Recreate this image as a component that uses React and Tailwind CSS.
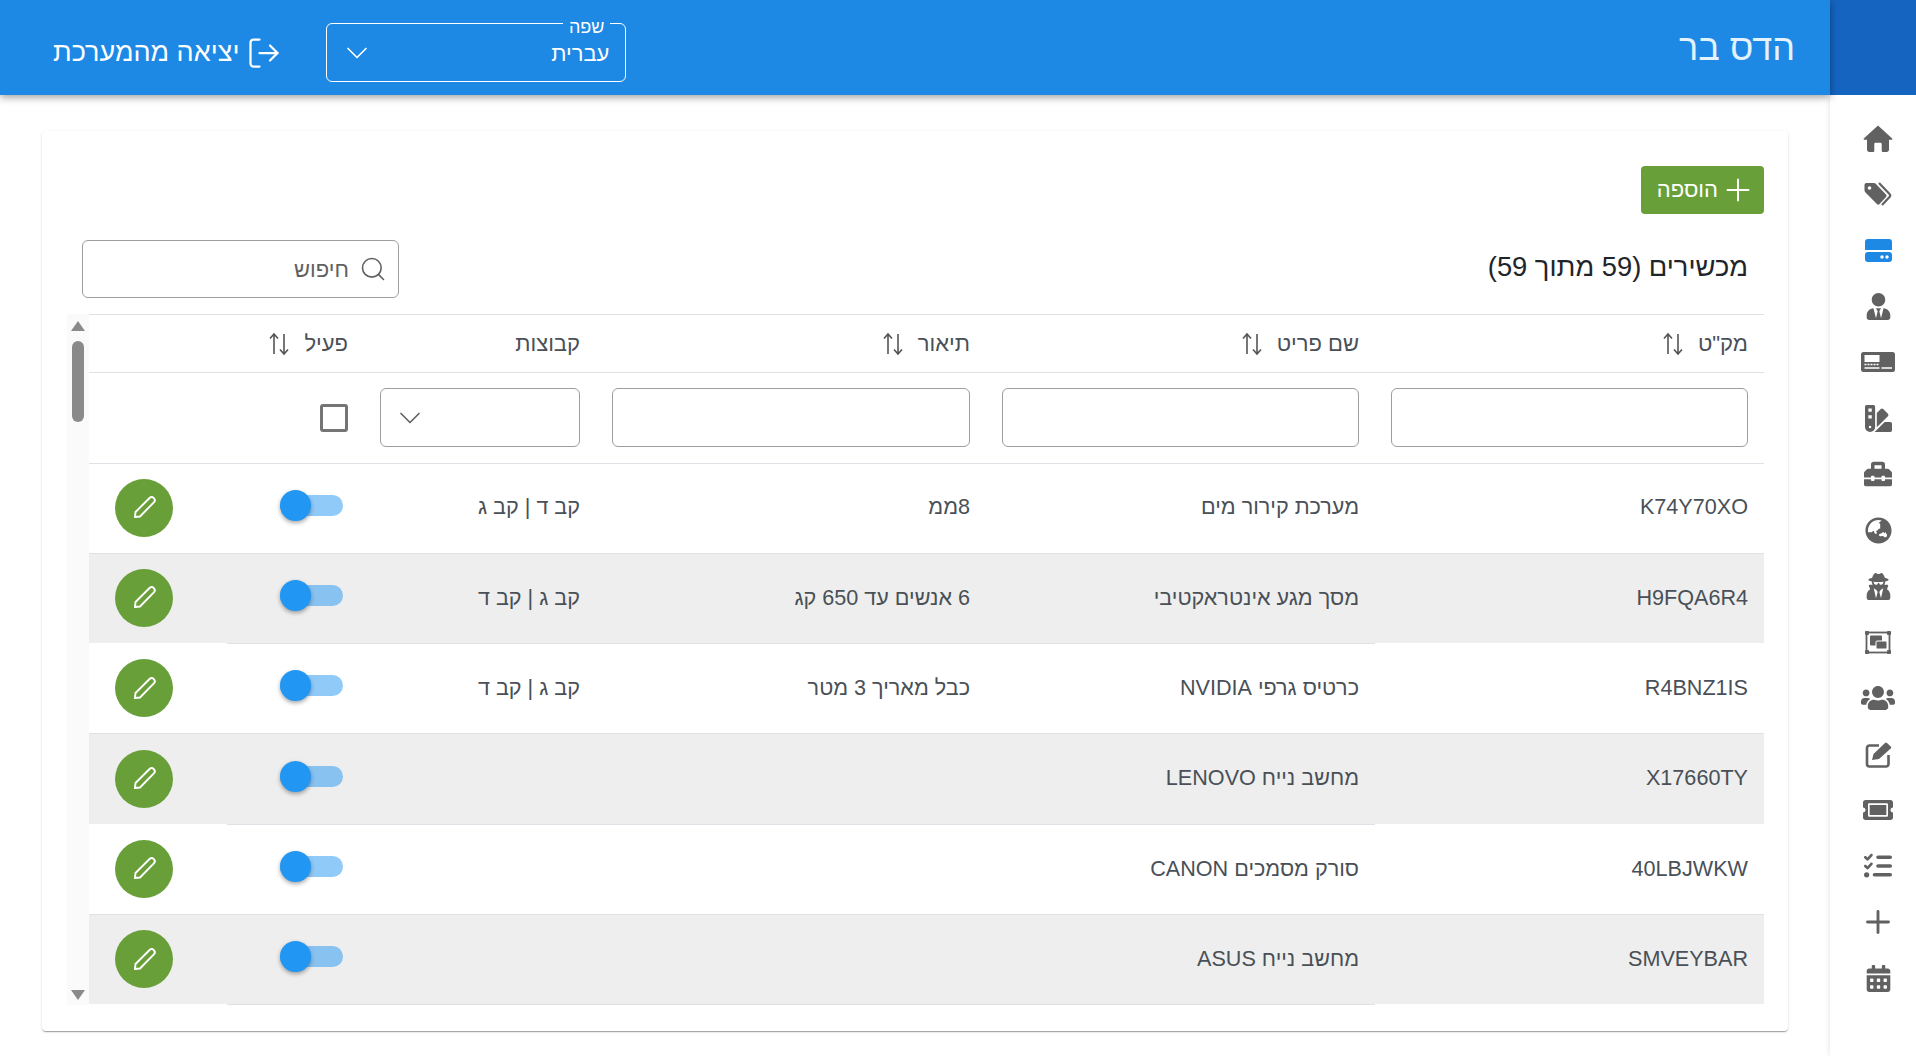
import React from 'react';
import { ChevronDown, LogOut, Search, Plus } from 'lucide-react';
import {
  FaUserTie, FaSwatchbook, FaToolbox, FaGlobeAsia, FaUserSecret,
  FaUsers, FaTicketAlt, FaCalendarAlt,
} from 'react-icons/fa';
import { FaListCheck } from 'react-icons/fa6';

const HomeIcon = () => (
  <svg width="30" height="27" viewBox="0 0 30 27" fill="currentColor">
    <path d="M15 .5 .8 13.6c-.5.5-.2 1.2.5 1.2H4v9.7C4 25.900 5 27 6.400 27H10c.8 0 1.300-.6 1.300-1.300V19c0-.8.6-1.300 1.300-1.300h4.800c.8 0 1.300.6 1.300 1.300v6.700c0 .8.6 1.300 1.300 1.300h3.600c1.400 0 2.400-1.100 2.400-2.500v-9.700h2.700c.7 0 1-.7.5-1.200z" />
  </svg>
);

const TagsIcon = () => (
  <svg width="28" height="24" viewBox="0 0 28 24">
    <path fill="currentColor" d="M2.500 1H10c.8 0 1.200.3 1.700.8L22 12.500c.8.8.8 1.800 0 2.600l-6.500 7c-.8.8-1.800.8-2.600 0L1.500 10.500C1 10 .5 9.300.5 8.500V3C.5 1.800 1.300 1 2.500 1z" />
    <circle cx="5.500" cy="6" r="1.800" fill="#fff" />
    <path fill="none" stroke="currentColor" strokeWidth="2.200" d="M15 1l10.500 11c.9.9.9 2 0 3L18 23" />
  </svg>
);

const DriveIcon = () => (
  <svg width="27" height="23" viewBox="0 0 27 23" fill="currentColor">
    <path d="M0 3a3 3 0 0 1 3-3h21a3 3 0 0 1 3 3v8H0z" />
    <path d="M0 16a3 3 0 0 1 3-3h21a3 3 0 0 1 3 3v4a3 3 0 0 1-3 3H3a3 3 0 0 1-3-3z" />
    <circle cx="17" cy="18" r="1.700" fill="#fff" />
    <circle cx="22" cy="18" r="1.700" fill="#fff" />
  </svg>
);

const CheckCardIcon = () => (
  <svg width="34" height="20" viewBox="0 0 34 20">
    <rect width="34" height="20" rx="2.500" fill="currentColor" />
    <rect x="3.500" y="3" width="15" height="7" fill="#fff" />
    <path d="M3.500 12.500h15" stroke="#fff" strokeWidth="1.500" strokeDasharray="2 1" fill="none" />
    <path d="M3.500 16h15M20.500 16h10.500" stroke="#fff" strokeWidth="1.500" fill="none" />
  </svg>
);

const FrameIcon = () => (
  <svg width="26" height="23" viewBox="0 0 26 23" fill="currentColor">
    <rect x="1.500" y="1.500" width="23" height="20" fill="none" stroke="currentColor" strokeWidth="1.800" />
    <rect width="4" height="4" rx="1" />
    <rect x="22" width="4" height="4" rx="1" />
    <rect y="19" width="4" height="4" rx="1" />
    <rect x="22" y="19" width="4" height="4" rx="1" />
    <rect x="5" y="4.500" width="12" height="10" rx="1" />
    <rect x="11" y="10" width="11" height="8" rx="1" stroke="#fff" strokeWidth="1" />
  </svg>
);

const EditIcon = () => (
  <svg width="27" height="27" viewBox="0 0 27 27">
    <path d="M14 4.500H4.500A2.500 2.500 0 0 0 2 7v16a2.500 2.500 0 0 0 2.500 2.500H21a2.500 2.500 0 0 0 2.500-2.500v-9" fill="none" stroke="currentColor" strokeWidth="2.600" />
    <path d="M7 19l1.500-6L20 2c.7-.7 1.400-.7 2 0l3.700 3.500c.7.7.7 1.400 0 2L14 18z" fill="currentColor" />
  </svg>
);

const navItems = [
  { el: <HomeIcon /> },
  { el: <TagsIcon /> },
  { el: <DriveIcon />, active: true },
  { el: <FaUserTie size={27} /> },
  { el: <CheckCardIcon /> },
  { el: <FaSwatchbook size={27} /> },
  { el: <FaToolbox size={28} /> },
  { el: <FaGlobeAsia size={27} /> },
  { el: <FaUserSecret size={27} /> },
  { el: <FrameIcon /> },
  { el: <FaUsers size={34} /> },
  { el: <EditIcon /> },
  { el: <FaTicketAlt size={30} /> },
  { el: <FaListCheck size={28} /> },
  { el: <Plus size={36} strokeWidth={1.9} /> },
  { el: <FaCalendarAlt size={27} /> },
];

const rows = [
  { sku: 'K74Y70XO', name: 'מערכת קירור מים', desc: '8ממ', groups: 'קב ד | קב ג' },
  { sku: 'H9FQA6R4', name: 'מסך מגע אינטראקטיבי', desc: '6 אנשים עד 650 קג', groups: 'קב ג | קב ד' },
  { sku: 'R4BNZ1IS', name: 'כרטיס גרפי NVIDIA', desc: 'כבל מאריך 3 מטר', groups: 'קב ג | קב ד' },
  { sku: 'X17660TY', name: 'מחשב נייח LENOVO', desc: '', groups: '' },
  { sku: '40LBJWKW', name: 'סורק מסמכים CANON', desc: '', groups: '' },
  { sku: 'SMVEYBAR', name: 'מחשב נייח ASUS', desc: '', groups: '' },
];

const gridCols = 'grid grid-cols-[389px_389px_390px_232px_137px_1fr]';

const SortIcon = () => (
  <svg width="22" height="24" viewBox="0 0 22 24" fill="none" stroke="#555" strokeWidth="1.6">
    <path d="M6 22V2M2 6.500 6 2l4 4.500" />
    <path d="M16 2v20M12 17.500l4 4.500 4-4.500" />
  </svg>
);

const PencilIcon = () => (
  <svg width="27" height="27" viewBox="0 0 24 24" fill="none" stroke="#fff" strokeWidth="1.7" strokeLinejoin="round">
    <path d="M3.500 20.500 4 16 16.500 3.600a2.600 2.600 0 0 1 3.800 3.800L8 20z" />
  </svg>
);

const Header = ({ label, className = '' }) => (
  <div className={`flex items-center gap-[14px] px-4 h-[57px] text-[22px] text-[#495057] ${className}`}>
    <span>{label}</span>
    <SortIcon />
  </div>
);

const Toggle = () => (
  <div className="relative w-[63px] h-[21px] rounded-full bg-[#2196f3]/50">
    <div className="absolute right-[32px] top-[-5px] w-[31px] h-[31px] rounded-full bg-[#2196f3] shadow-[0_2px_4px_rgba(0,0,0,0.35)]" />
  </div>
);

export default function App() {
  return (
    <div dir="rtl" className="flex h-[1056px] overflow-hidden bg-white text-[#212529] font-['Liberation_Sans',sans-serif]">
      <aside className="w-[86px] shrink-0 flex flex-col shadow-[0_0_6px_rgba(0,0,0,0.12)] z-10">
        <div className="h-[95px] bg-[#1565c0]" />
        <div className="flex flex-col items-center pt-[15px] pl-[10px]">
          {navItems.map((item, idx) => (
            <div key={idx} className={`h-[56px] w-full flex items-center justify-center ${item.active ? 'text-[#1e88e5]' : 'text-[#616161]'}`}>
              {item.el}
            </div>
          ))}
        </div>
      </aside>

      <div className="flex-1 min-w-0 flex flex-col">
        <header className="h-[95px] shrink-0 bg-[#1e88e5] text-white flex items-center justify-between pr-[35px] pl-[53px] shadow-[0_2px_8px_rgba(0,0,0,0.4)] z-10">
          <div className="text-[36px] text-[#e3f2fd]">הדס בר</div>
          <div className="flex items-center gap-[44px]">
            <div className="relative w-[300px] h-[59px] mt-[10px] border border-white rounded-[6px] flex items-center justify-between pr-4 pl-[12px]">
              <span className="absolute right-[15px] top-[-7px] bg-[#1e88e5] px-[6px] text-[18px] leading-[20px]">שפה</span>
              <span className="text-[22px] mt-[1px]">עברית</span>
              <ChevronDown size={36} strokeWidth={1.1} />
            </div>
            <div className="flex items-center gap-[7px] text-[27px] mt-[10px]">
              <LogOut size={36} strokeWidth={1.5} />
              <span>יציאה מהמערכת</span>
            </div>
          </div>
        </header>

        <main className="flex-1 min-h-0 pt-[36px] pr-[42px] pl-[42px]">
          <div className="h-[900px] bg-white rounded-[4px] shadow-[0_2px_1px_-1px_rgba(0,0,0,0.2),0_1px_1px_0_rgba(0,0,0,0.14),0_1px_3px_0_rgba(0,0,0,0.12)] pt-[35px] pr-6 pl-[25px]">
            <button className="w-[123px] h-[48px] rounded-[4px] bg-[#689f38] text-white flex items-center pr-[8px] text-[22px]">
              <Plus size={36} strokeWidth={1.3} />
              <span className="mr-[2px] -mt-[1px]">הוספה</span>
            </button>

            <div className="flex items-start justify-between h-[74px] mt-[26px] pr-4 pl-[15px]">
              <h1 className="text-[27.3px] leading-[36px] font-normal mt-[9px]">מכשירים (59 מתוך 59)</h1>
              <div className="w-[317px] h-[58px] border border-[#9e9e9e] rounded-[6px] flex items-center gap-[10px] pr-[11px] text-[22px] text-[#616161]">
                <Search size={28} strokeWidth={1.4} />
                <span>חיפוש</span>
              </div>
            </div>

            <div className="flex">
              <div className="flex-1 min-w-0 border-t border-[#dee2e6]">
                <div className={`${gridCols} border-b border-[#dee2e6]`}>
                  <Header label={'מק"ט'} />
                  <Header label="שם פריט" />
                  <Header label="תיאור" />
                  <div className="flex items-center px-4 text-[22px] text-[#495057]">קבוצות</div>
                  <Header label="פעיל" className="col-span-2" />
                </div>
                <div className={`${gridCols} h-[90.5px] items-center border-b border-[#dee2e6]`}>
                  {[0, 1, 2].map((i) => (
                    <div key={i} className="px-4"><div className="h-[59px] border border-[#9e9e9e] rounded-[6px]" /></div>
                  ))}
                  <div className="px-4">
                    <div className="h-[59px] border border-[#9e9e9e] rounded-[6px] flex items-center justify-end pl-[11px] text-[#616161]">
                      <ChevronDown size={36} strokeWidth={1.1} />
                    </div>
                  </div>
                  <div className="px-4 col-span-2">
                    <div className="w-[28px] h-[28px] border-[3px] border-[#757575] rounded-[3px]" />
                  </div>
                </div>
                {rows.map((row, idx) => {
                  const even = idx % 2 === 1;
                  const mid = `flex items-center px-4 pb-[1px] border-b ${even ? 'border-[#dee2e6] bg-[#eeeeee]' : 'border-[#dee2e6]'}`;
                  const side = `flex items-center border-b ${even ? 'border-white bg-[#eeeeee]' : 'border-[#dee2e6]'}`;
                  return (
                    <div key={row.sku} className={`${gridCols} h-[90.3px] text-[21.6px] text-[#495057]`}>
                      <div className={`${side} px-4 pb-[1px]`}>{row.sku}</div>
                      <div className={mid}>{row.name}</div>
                      <div className={mid}>{row.desc}</div>
                      <div className={mid}>{row.groups}</div>
                      <div className={`${mid} !pr-[21px] !pl-0`}>
                        <div className="-mt-[5px]"><Toggle /></div>
                      </div>
                      <div className={`${side} justify-end pl-[26px] pb-[1px]`}>
                        <button className="w-[58px] h-[58px] rounded-full bg-[#689f38] flex items-center justify-center">
                          <PencilIcon />
                        </button>
                      </div>
                    </div>
                  );
                })}
              </div>
              <div className="w-[22px] shrink-0 bg-[#fafafa] flex flex-col items-center pt-[7px] pb-[5px]">
                <div className="w-0 h-0 border-x-[7px] border-x-transparent border-b-[10px] border-b-[#8a8a8a]" />
                <div className="w-[12px] h-[81px] mt-[10px] rounded-full bg-[#8a8a8a]" />
                <div className="flex-1" />
                <div className="w-0 h-0 border-x-[7px] border-x-transparent border-t-[10px] border-t-[#8a8a8a]" />
              </div>
            </div>
          </div>
        </main>
      </div>
    </div>
  );
}
